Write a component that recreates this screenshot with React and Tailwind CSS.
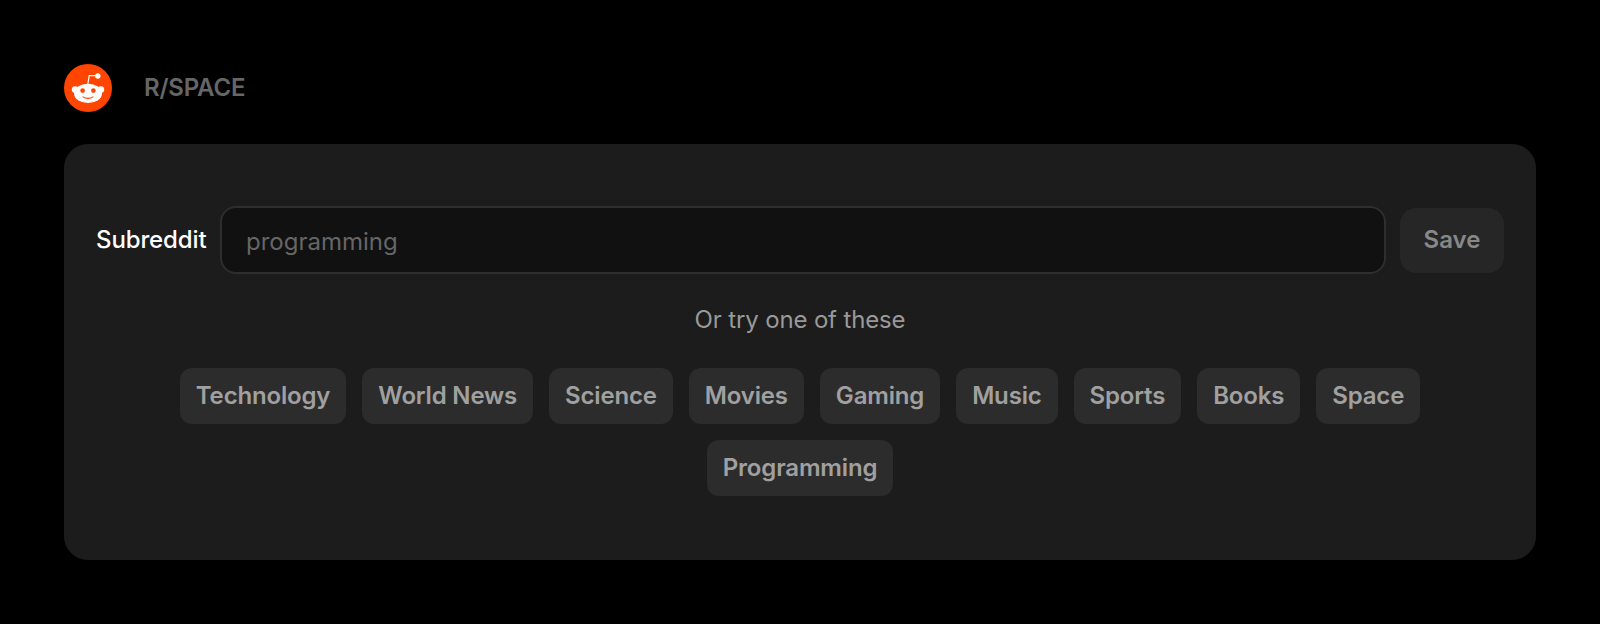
const topics = ['Technology', 'World News', 'Science', 'Movies', 'Gaming', 'Music', 'Sports', 'Books', 'Space', 'Programming'];

function RedditLogo() {
  return (
    <svg width="48" height="48" viewBox="0 0 48 48" className="shrink-0">
      <circle cx="24" cy="24" r="24" fill="#ff4500" />
      <path d="M23.8 20l1.4-8.4h6.4" fill="none" stroke="#fff" strokeWidth="1.2" />
      <circle cx="33.8" cy="12" r="2.7" fill="#fff" />
      <circle cx="11.2" cy="25.6" r="3.4" fill="#fff" />
      <circle cx="36.8" cy="25.6" r="3.4" fill="#fff" />
      <ellipse cx="24" cy="29.4" rx="14" ry="9.6" fill="#fff" />
      <circle cx="18.6" cy="26.6" r="2.3" fill="#ff4500" />
      <circle cx="29.4" cy="26.6" r="2.3" fill="#ff4500" />
      <path d="M19 32.9c2.8 1.9 7.2 1.9 10 0" fill="none" stroke="#ff4500" strokeWidth="1.1" strokeLinecap="round" />
    </svg>
  );
}

export default function App() {
  return (
    <div className="min-h-[624px] bg-black p-16 font-['Inter',sans-serif]">
      <div className="mb-8 flex h-12 items-center gap-8">
        <RedditLogo />
        <span className="text-2xl font-semibold tracking-[-0.2px] text-[#666666]">R/SPACE</span>
      </div>

      <div className="h-[416px] rounded-3xl bg-[#1c1c1c] px-8 pt-[62px]">
        <div className="flex items-center gap-[14px]">
          <label className="w-[110px] shrink-0 text-2xl font-medium tracking-[-0.12px] text-white">Subreddit</label>
          <input
            className="h-[68px] min-w-0 flex-1 rounded-2xl border-2 border-[#2e2e2e] bg-[#111111] px-6 pt-0.5 text-2xl text-white outline-none placeholder:text-[#666666]"
            placeholder="programming"
          />
          <button type="button" className="h-[65px] w-[104px] shrink-0 rounded-2xl bg-[#262626] text-2xl font-semibold text-[#888888]">
            Save
          </button>
        </div>

        <p className="mt-[14px] text-center text-2xl tracking-[-0.15px] leading-[64px] text-[#999999]">Or try one of these</p>

        <div className="mt-[16px] flex flex-wrap justify-center gap-4">
          {topics.map((topic) => (
            <button key={topic} type="button" className="h-14 rounded-xl bg-[#2c2c2c] px-4 text-2xl font-semibold tracking-[-0.17px] text-[#a0a0a0]">
              {topic}
            </button>
          ))}
        </div>
      </div>
    </div>
  );
}
